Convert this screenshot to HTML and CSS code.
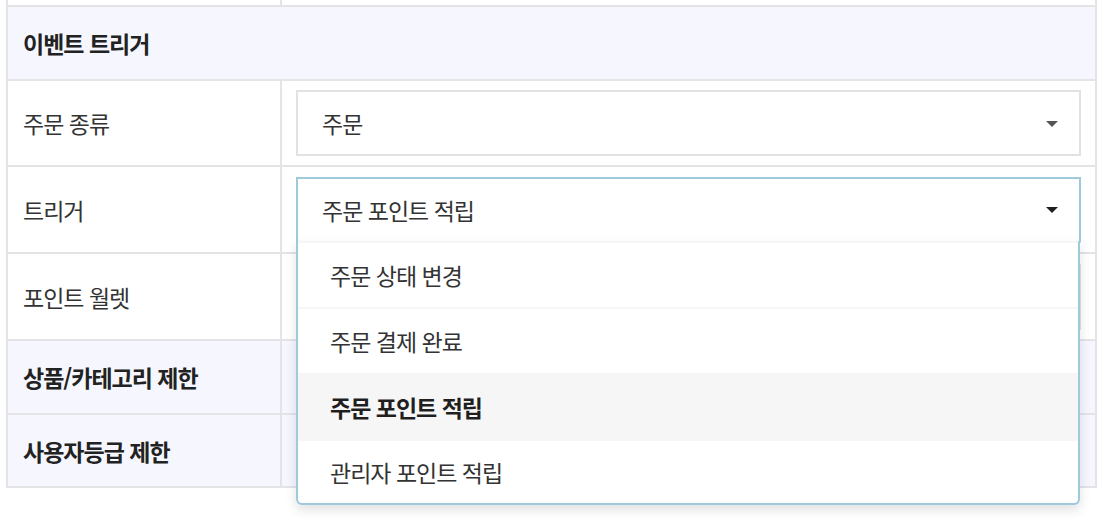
FILE: index.html
```html
<!DOCTYPE html>
<html lang="ko">
<head>
<meta charset="utf-8">
<title>이벤트 트리거</title>
<link rel="stylesheet" href="styles.css">
</head>
<body>
<div class="table">
  <div class="cell label partial"></div>
  <div class="cell value partial"></div>

  <div class="cell section">이벤트 트리거</div>

  <div class="cell label">주문 종류</div>
  <div class="cell value">
    <div class="select">
      <span class="select-text">주문</span>
      <span class="caret"></span>
    </div>
  </div>

  <div class="cell label">트리거</div>
  <div class="cell value">
    <div class="select-wrap">
      <div class="select open">
        <span class="select-text">주문 포인트 적립</span>
        <span class="caret dark"></span>
      </div>
      <ul class="menu">
        <li class="option">주문 상태 변경</li>
        <li class="option">주문 결제 완료</li>
        <li class="option selected">주문 포인트 적립</li>
        <li class="option">관리자 포인트 적립</li>
      </ul>
    </div>
  </div>

  <div class="cell label">포인트 월렛</div>
  <div class="cell value">
    <div class="select">
      <span class="select-text"></span>
      <span class="caret"></span>
    </div>
  </div>

  <div class="cell label strong tinted">상품/카테고리 제한</div>
  <div class="cell value tinted"></div>

  <div class="cell label strong tinted">사용자등급 제한</div>
  <div class="cell value tinted"></div>
</div>
</body>
</html>
```

FILE: styles.css
```css
* { box-sizing: border-box; }

html, body {
  margin: 0;
  padding: 0;
  background: #ffffff;
}

body {
  font-family: "Noto Sans CJK KR", "Noto Sans", sans-serif;
  color: #333333;
  width: 1100px;
  height: 526px;
  overflow: hidden;
}

.table {
  margin-left: 6px;
  width: 1091px;
  display: grid;
  grid-template-columns: 272px 813px;
  grid-template-rows: 5px 72px 84px 85px 85px 72px 71px;
  gap: 2px;
  padding: 0 2px 2px 2px;
  background: #e4e4e6;
}

.cell {
  background: #ffffff;
  display: flex;
  align-items: center;
  min-width: 0;
}

.section {
  grid-column: 1 / 3;
  background: #f6f7fe;
  padding-left: 15px;
  font-size: 23px;
  letter-spacing: -1px;
  font-weight: 700;
  color: #222222;
}

.label {
  padding-left: 15px;
  font-size: 23px;
  letter-spacing: -1px;
  color: #333333;
}

.label.strong {
  font-weight: 700;
  color: #222222;
}

.tinted {
  background: #f6f7fe;
}

.value {
  padding: 0 14px;
}

.select-wrap {
  position: relative;
  width: 100%;
}

.select {
  width: 100%;
  height: 66px;
  border: 2px solid #e2e2e2;
  background: #ffffff;
  display: flex;
  align-items: center;
  justify-content: space-between;
  padding: 0 21px 0 24px;
}

.select.open {
  border-color: #a0cadc;
  border-bottom-color: transparent;
}

.select-text {
  font-size: 23px;
  letter-spacing: -1px;
  color: #333333;
}

.caret {
  width: 0;
  height: 0;
  border-left: 6px solid transparent;
  border-right: 6px solid transparent;
  border-top: 6px solid #555555;
  margin-top: 1px;
}

.caret.dark {
  border-top-color: #1f1f1f;
}

.menu {
  position: absolute;
  top: calc(100% - 2px);
  left: 0;
  right: 1px;
  margin: 0;
  padding: 0;
  list-style: none;
  background: #ffffff;
  border: 2px solid #a0cadc;
  border-top: none;
  border-radius: 0 0 6px 6px;
  box-shadow: 0 5px 12px rgba(0, 0, 0, 0.12);
  z-index: 10;
  overflow: hidden;
}

.option {
  height: 66px;
  border-top: 2px solid #f6f6f6;
  display: flex;
  align-items: center;
  padding-left: 32px;
  font-size: 23px;
  letter-spacing: -1px;
  color: #333333;
}

.option.selected {
  background: #f6f6f6;
  font-weight: 700;
  color: #1f1f1f;
}

.option:last-child {
  height: 64px;
}
```
